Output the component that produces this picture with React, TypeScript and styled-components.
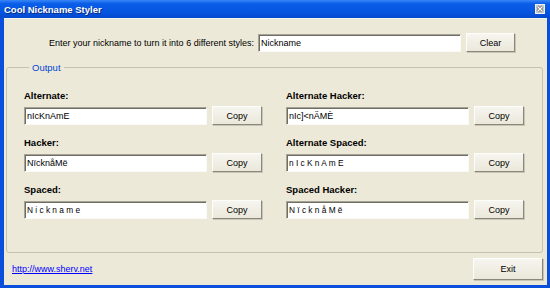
import React, {useState} from 'react'
import styled, {createGlobalStyle} from 'styled-components'

const GlobalStyle = createGlobalStyle`
  html, body {
    margin: 0;
    padding: 0;
    background: #ece9d8;
  }
  body {
    font-family: Tahoma, "Liberation Sans", Arial, sans-serif;
    font-size: 9px;
    color: #000;
  }
`;

const Window = styled.div`
  width: 550px;
  height: 288px;
  display: flex;
  flex-direction: column;
  background: #0a4fdc;
  overflow: hidden;
`;

const TitleBar = styled.div`
  height: 18px;
  flex: 0 0 18px;
  display: flex;
  align-items: center;
  justify-content: space-between;
  padding: 0 4px 0 4px;
  background: linear-gradient(to bottom, #3a86f8 0%, #0a5ee8 20%, #0554e0 70%, #0448cc 100%);
  color: #fff;
  font-weight: bold;
  font-size: 9.5px;
  text-shadow: 1px 1px 0 #0a2a80;
`;

const CloseButton = styled.div`
  width: 10px;
  height: 10px;
  display: flex;
  margin-right: 1px;
`;

const Frame = styled.div`
  flex: 1;
  display: flex;
  padding: 0 3px 3px 4px;
  background: #0a4fdc;
`;

const Body = styled.div`
  flex: 1;
  display: flex;
  flex-direction: column;
  background: #ece9d8;
  border-top: 1px solid #f4f3ee;
`;

const PromptRow = styled.div`
  display: flex;
  align-items: center;
  justify-content: flex-end;
  gap: 5px;
  padding: 14px 32px 0 0;
`;

const Prompt = styled.span`
  margin-right: -1px;
`;

const TextBox = styled.input<{$width: number; $spaced?: boolean}>`
  box-sizing: border-box;
  width: ${p => p.$width}px;
  height: 18px;
  margin: 0;
  padding: 1px 2px 0;
  border: 1px solid;
  border-color: #a5a296 #fbfaf6 #fbfaf6 #a5a296;
  box-shadow: inset 1px 1px 0 #6f6d64;
  background: #fff;
  font-family: Tahoma, "Liberation Sans", Arial, sans-serif;
  font-size: ${p => p.$spaced ? '8.3px' : '9px'};
  color: #000;
  outline: none;
`;

const Button = styled.button<{$width: number; $height?: number}>`
  box-sizing: border-box;
  width: ${p => p.$width}px;
  height: ${p => p.$height || 19}px;
  margin: 0;
  padding: 0;
  border: 1px solid;
  border-color: #fdfdfb #8a887d #8a887d #fdfdfb;
  box-shadow: 1px 1px 0 #c9c6b8;
  background: linear-gradient(to bottom, #f6f5ef, #ebe8da);
  font-family: Tahoma, "Liberation Sans", Arial, sans-serif;
  font-size: 9px;
  color: #000;
`;

const Group = styled.fieldset`
  margin: 10px 4px 0 2px;
  padding: 17px 18px 33px 17px;
  border: 1px solid #c4c1b2;
  border-radius: 3px;
  min-width: 0;
`;

const Legend = styled.legend`
  margin-left: 5px;
  padding: 0 3px;
  color: #0046d5;
  font-size: 9.5px;
  line-height: 11px;
`;

const Grid = styled.div`
  display: grid;
  grid-template-columns: 238px 238px;
  column-gap: 24px;
  row-gap: 12px;
`;

const Field = styled.div`
  display: flex;
  flex-direction: column;
  gap: 4px;
`;

const Label = styled.label`
  font-weight: bold;
  font-size: 9.5px;
  line-height: 12px;
`;

const FieldRow = styled.div`
  display: flex;
  align-items: center;
  gap: 5px;
`;

const Footer = styled.div`
  display: flex;
  align-items: center;
  justify-content: space-between;
  padding: 5px 4px 0 8px;
`;

const Link = styled.a`
  color: #0000ff;
  text-decoration: underline;
  font-size: 9px;
`;

const CloseIcon = () => (
    <svg width="10" height="10" viewBox="0 0 10 10">
        <rect x="0.5" y="0.5" width="9" height="9" fill="#c9c9c9" stroke="#f0f0f0"/>
        <path d="M2.5 2.5 L7.5 7.5 M7.5 2.5 L2.5 7.5" stroke="#5a5a5a" strokeWidth="2.6"/>
        <path d="M2.5 2.5 L7.5 7.5 M7.5 2.5 L2.5 7.5" stroke="#fff" strokeWidth="1.3"/>
    </svg>
)

const styles = [
    {label: 'Alternate:', value: 'nIcKnAmE'},
    {label: 'Alternate Hacker:', value: 'nIc]<nÄMÈ'},
    {label: 'Hacker:', value: 'NïcknåMë'},
    {label: 'Alternate Spaced:', value: 'n I c K n A m E', spaced: true},
    {label: 'Spaced:', value: 'N i c k n a m e', spaced: true},
    {label: 'Spaced Hacker:', value: 'N ï c k n å M ë', spaced: true},
]

export default function App() {
    const [nick, setNick] = useState('Nickname')

    return (
        <>
            <GlobalStyle/>
            <Window>
                <TitleBar>
                    <span>Cool Nickname Styler</span>
                    <CloseButton><CloseIcon/></CloseButton>
                </TitleBar>
                <Frame>
                    <Body>
                        <PromptRow>
                            <Prompt>Enter your nickname to turn it into 6 different styles:</Prompt>
                            <TextBox $width={203} value={nick} onChange={e => setNick(e.target.value)}/>
                            <Button $width={49} onClick={() => setNick('')}>Clear</Button>
                        </PromptRow>
                        <Group>
                            <Legend>Output</Legend>
                            <Grid>
                                {styles.map(s => (
                                    <Field key={s.label}>
                                        <Label>{s.label}</Label>
                                        <FieldRow>
                                            <TextBox $width={183} $spaced={s.spaced} value={s.value} readOnly/>
                                            <Button $width={50}>Copy</Button>
                                        </FieldRow>
                                    </Field>
                                ))}
                            </Grid>
                        </Group>
                        <Footer>
                            <Link href="#">http://www.sherv.net</Link>
                            <Button $width={70} $height={22}>Exit</Button>
                        </Footer>
                    </Body>
                </Frame>
            </Window>
        </>
    )
}
